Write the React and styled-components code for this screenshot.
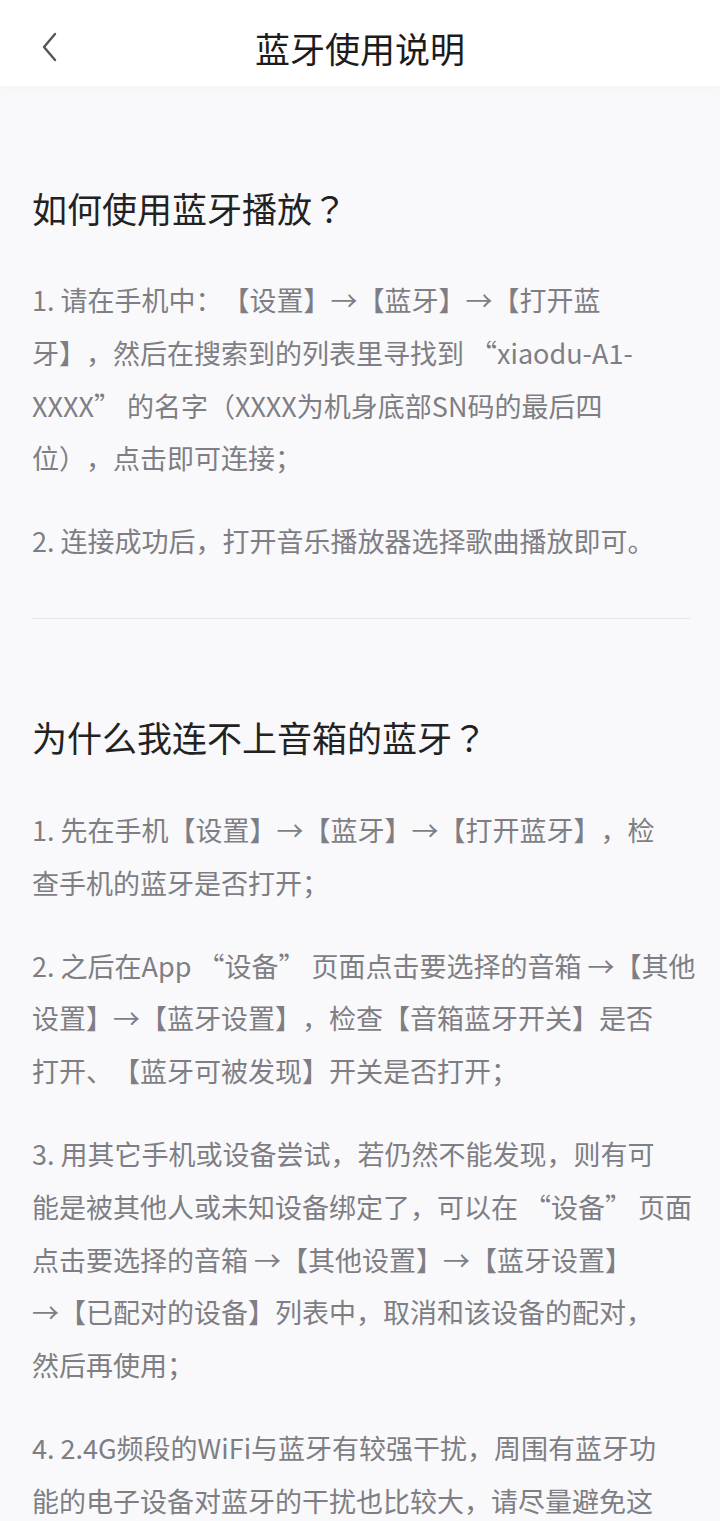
import React from 'react'
import styled, { createGlobalStyle } from 'styled-components'

const GlobalStyle = createGlobalStyle`
  html, body {
    margin: 0;
    padding: 0;
    background: #f9f9fb;
  }
  body {
    font-family: "Noto Sans CJK SC", "Noto Sans", sans-serif;
    -webkit-font-smoothing: antialiased;
    text-spacing-trim: space-all;
  }
`

const sections = [
  {
    title: '如何使用蓝牙播放',
    items: [
      [
        '1. 请在手机中：【设置】→【蓝牙】→【打开蓝',
        '牙】，然后在搜索到的列表里寻找到 “xiaodu-A1-',
        'XXXX” 的名字（XXXX为机身底部SN码的最后四',
        '位），点击即可连接；',
      ],
      ['2. 连接成功后，打开音乐播放器选择歌曲播放即可。'],
    ],
  },
  {
    title: '为什么我连不上音箱的蓝牙',
    items: [
      ['1. 先在手机【设置】→【蓝牙】→【打开蓝牙】，检', '查手机的蓝牙是否打开；'],
      [
        '2. 之后在App “设备” 页面点击要选择的音箱 →【其他',
        '设置】→【蓝牙设置】，检查【音箱蓝牙开关】是否',
        '打开、【蓝牙可被发现】开关是否打开；',
      ],
      [
        '3. 用其它手机或设备尝试，若仍然不能发现，则有可',
        '能是被其他人或未知设备绑定了，可以在 “设备” 页面',
        '点击要选择的音箱 →【其他设置】→【蓝牙设置】',
        '→【已配对的设备】列表中，取消和该设备的配对，',
        '然后再使用；',
      ],
      [
        '4. 2.4G频段的WiFi与蓝牙有较强干扰，周围有蓝牙功',
        '能的电子设备对蓝牙的干扰也比较大，请尽量避免这',
        '些设备的干扰。',
      ],
    ],
  },
]

const Page = styled.div`
  min-height: 1521px;
  background: #f9f9fb;
  overflow: hidden;
`

const Header = styled.header`
  height: 86px;
  background: #fff;
  display: flex;
  align-items: flex-start;
  justify-content: center;
  padding-top: 22px;
  box-sizing: border-box;
  position: relative;
  box-shadow: 0 6px 12px rgba(0, 0, 0, 0.015);
`

const BackButton = styled.button`
  position: absolute;
  left: 34px;
  top: 28px;
  width: 30px;
  height: 38px;
  padding: 0;
  border: none;
  background: none;
  display: flex;
  align-items: center;
  justify-content: center;
`

const Title = styled.h1`
  margin: 0;
  font-size: 35px;
  line-height: 52px;
  font-weight: 400;
  color: #1c1c1c;
`

const Content = styled.main`
  padding: 0 30px 0 32px;
`

const Section = styled.section`
  padding-top: ${(p) => (p.$first ? '98px' : '94px')};
  padding-bottom: ${(p) => (p.$first ? '50px' : '0')};
  border-bottom: ${(p) => (p.$first ? '1.5px solid #e6e6e8' : 'none')};
`

const Heading = styled.h2`
  margin: 0 0 ${(p) => (p.$first ? '42px' : '43px')};
  font-size: 35px;
  line-height: 48px;
  font-weight: 400;
  color: #222;
`

// centred full-width question mark, as in the app
const Mark = styled.span`
  font-family: "Noto Sans CJK TC", "Noto Sans CJK SC", sans-serif;
`

const Para = styled.p`
  margin: 0 0 30px;
  font-size: 27px;
  line-height: 52.8px;
  color: #7e7e84;
  white-space: nowrap;
  &:last-child {
    margin-bottom: 0;
  }
`

const Line = styled.span`
  display: block;
`

export default function App() {
  return (
    <Page>
      <GlobalStyle />
      <Header>
        <BackButton aria-label="返回">
          <svg width="20" height="30" viewBox="0 0 20 30" fill="none">
            <path d="M16 2 L5 15 L16 28" stroke="#555" strokeWidth="2.4" strokeLinecap="round" strokeLinejoin="round" />
          </svg>
        </BackButton>
        <Title>蓝牙使用说明</Title>
      </Header>
      <Content>
        {sections.map((s, i) => (
          <Section key={s.title} $first={i === 0}>
            <Heading $first={i === 0}>
              {s.title}
              <Mark>？</Mark>
            </Heading>
            {s.items.map((lines, j) => (
              <Para key={j}>
                {lines.map((l) => (
                  <Line key={l}>{l}</Line>
                ))}
              </Para>
            ))}
          </Section>
        ))}
      </Content>
    </Page>
  )
}
